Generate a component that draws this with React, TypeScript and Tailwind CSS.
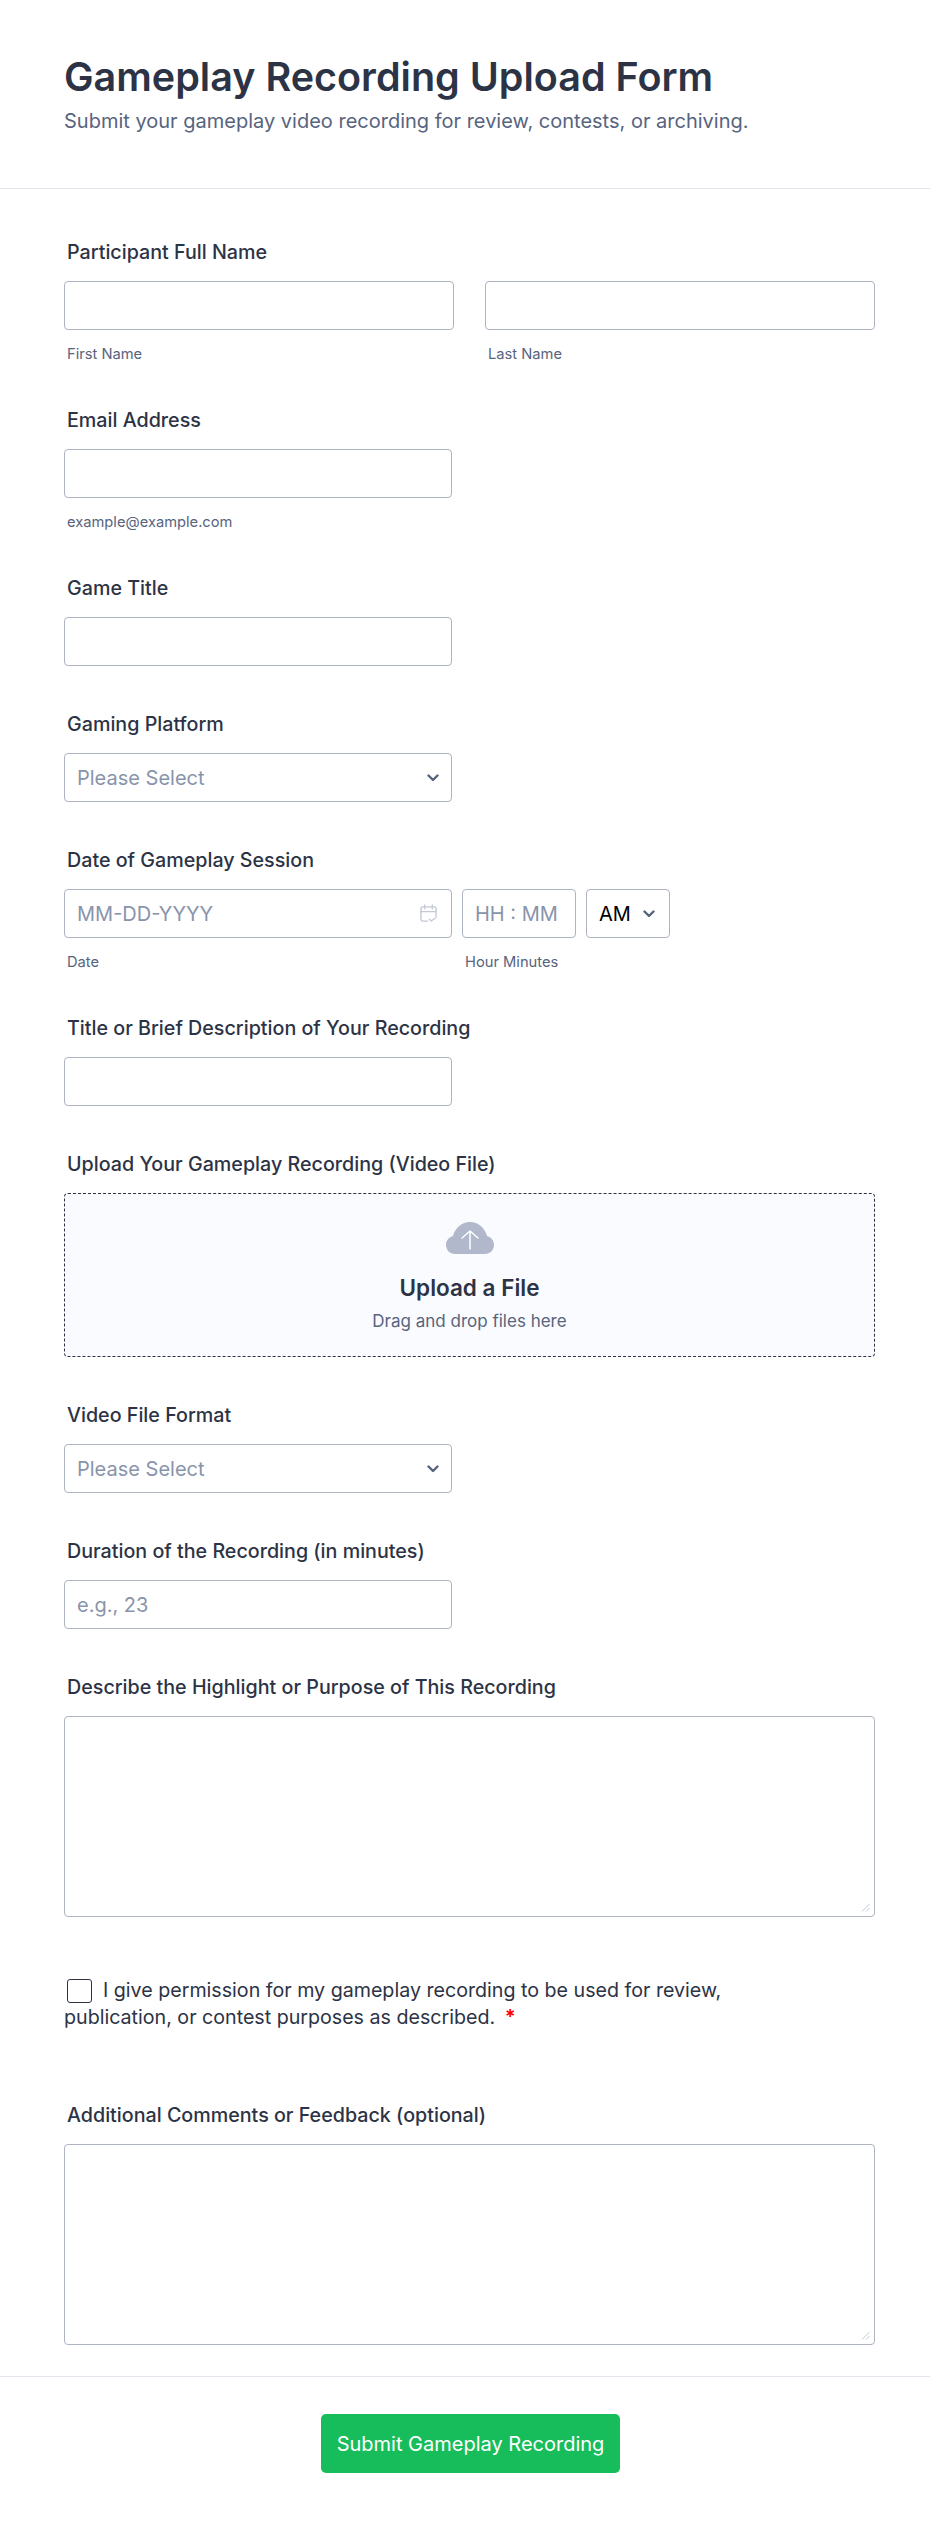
import React from 'react'

const inputClass =
    'block h-[49px] w-full rounded-[4px] border border-[#aeb3c1] bg-white px-[12px] text-[20px] text-[#2c3345] placeholder:text-[#8894ab] outline-none'

function Chevron({ className }: { className: string }) {
    return (
        <svg viewBox="0 0 12 8" fill="none" className={className}>
            <path d="M1.5 1.5 6 6l4.5-4.5" stroke="#57647e" strokeWidth="2.400" strokeLinecap="round" strokeLinejoin="round" />
        </svg>
    )
}

function Label({ children }: { children: React.ReactNode }) {
    return <label className="block pl-[3px] text-[19.700px] leading-[24px] font-[450] text-[#2c3345] mb-[17px] whitespace-nowrap">{children}</label>
}

function Sub({ children }: { children: React.ReactNode }) {
    return <div className="mt-[15px] mb-[-1px] pl-[3px] text-[14.700px] leading-[18px] text-[#57647e]">{children}</div>
}

function SelectBox() {
    return (
        <div className="relative w-[388px]">
            <select defaultValue="" className={`${inputClass} appearance-none !text-[#8894ab]`}>
                <option value="">Please Select</option>
            </select>
            <Chevron className="absolute right-[13px] top-[21px] w-[12px] h-[8px]" />
        </div>
    )
}

function Area() {
    return (
        <div className="relative">
            <textarea className="block h-[201px] w-full resize-none rounded-[4px] border border-[#aeb3c1] bg-white outline-none" />
            <svg viewBox="0 0 9 9" fill="none" stroke="#c3c8d4" strokeWidth="1" className="absolute right-[5px] bottom-[5px] w-[9px] h-[9px]">
                <path d="M1 8.500 8.500 1M5 8.500 8.500 5" />
            </svg>
        </div>
    )
}

export default function App() {
    return (
        <main className="min-h-[2523px] bg-white font-['Inter',sans-serif] text-[#2c3345]">
            {/* Header */}
            <header className="h-[189px] border-b border-[#e3e5ec] px-[64px] pt-[51px]">
                <h1 className="text-[39.500px] leading-[52px] font-semibold text-[#2c3345]">Gameplay Recording Upload Form</h1>
                <p className="mt-[4px] text-[20px] leading-[28px] text-[#57647e]">Submit your gameplay video recording for review, contests, or archiving.</p>
            </header>

            <form className="pl-[64px] pr-[55px] pt-[51px]">
                {/* Name */}
                <div className="mb-[46px]">
                    <Label>Participant Full Name</Label>
                    <div className="flex gap-[31px]">
                        <div className="w-[390px]">
                            <input className={inputClass} />
                            <Sub>First Name</Sub>
                        </div>
                        <div className="w-[390px]">
                            <input className={inputClass} />
                            <Sub>Last Name</Sub>
                        </div>
                    </div>
                </div>

                <div className="mb-[46px] w-[388px]">
                    <Label>Email Address</Label>
                    <input className={inputClass} />
                    <Sub>example@example.com</Sub>
                </div>

                <div className="mb-[46px] w-[388px]">
                    <Label>Game Title</Label>
                    <input className={inputClass} />
                </div>

                <div className="mb-[46px]">
                    <Label>Gaming Platform</Label>
                    <SelectBox />
                </div>

                {/* Date and time */}
                <div className="mb-[46px]">
                    <Label>Date of Gameplay Session</Label>
                    <div className="flex gap-[10px]">
                        <div className="w-[388px]">
                            <div className="relative">
                                <input className={inputClass} placeholder="MM-DD-YYYY" />
                                <svg viewBox="0 0 18 20" fill="none" stroke="#c3c8d4" strokeWidth="1.400" strokeLinecap="round" strokeLinejoin="round" className="absolute right-[15px] top-[15px] w-[17px] h-[19px]">
                                    <path d="M8 18H3a2 2 0 0 1-2-2V5a2 2 0 0 1 2-2h12a2 2 0 0 1 2 2v9" />
                                    <path d="M1 8h16M5 1v4M13 1v4" />
                                    <path d="m10 16 2 2 4-3" />
                                </svg>
                            </div>
                            <Sub>Date</Sub>
                        </div>
                        <div className="w-[114px]">
                            <input className={inputClass} placeholder="HH : MM" />
                            <Sub>Hour Minutes</Sub>
                        </div>
                        <div className="relative w-[84px]">
                            <select defaultValue="AM" className={`${inputClass} appearance-none !text-black`}>
                                <option>AM</option>
                                <option>PM</option>
                            </select>
                            <Chevron className="absolute right-[15px] top-[21px] w-[12px] h-[8px]" />
                        </div>
                    </div>
                </div>

                <div className="mb-[46px] w-[388px]">
                    <Label>Title or Brief Description of Your Recording</Label>
                    <input className={inputClass} />
                </div>

                {/* Upload */}
                <div className="mb-[46px]">
                    <Label>Upload Your Gameplay Recording (Video File)</Label>
                    <div className="flex h-[164px] flex-col items-center rounded-[4px] border border-dashed border-[#2c3345] bg-[#f9fbff] pt-[28px]">
                        <svg viewBox="0 0 48 32" className="w-[48px] h-[32px]">
                            <path d="M9 32C4 32 0 28 0 23c0-4.500 3-8 7-9 2-8 9-14 17-14s15 6 17 14c4 1 7 4.500 7 9 0 5-4 9-9 9H9Z" fill="#b1b8cb" />
                            <path d="M24 27V9M16 16l8-7 8 7" fill="none" stroke="#fff" strokeWidth="1.500" strokeLinecap="round" strokeLinejoin="round" />
                        </svg>
                        <div className="mt-[19px] text-[22.500px] leading-[30px] font-semibold text-[#2c3345]">Upload a File</div>
                        <div className="mt-[6px] text-[17px] leading-[24px] text-[#57647e]">Drag and drop files here</div>
                    </div>
                </div>

                <div className="mb-[46px]">
                    <Label>Video File Format</Label>
                    <SelectBox />
                </div>

                <div className="mb-[46px] w-[388px]">
                    <Label>Duration of the Recording (in minutes)</Label>
                    <input className={inputClass} placeholder="e.g., 23" />
                </div>

                <div className="mb-[60px]">
                    <Label>Describe the Highlight or Purpose of This Recording</Label>
                    <Area />
                </div>

                {/* Consent */}
                <div className="mb-[72px] text-[19.650px] leading-[27px] text-[#2c3345]">
                    <span className="mr-[11px] ml-[3px] inline-block h-[24px] w-[25px] rounded-[3px] border-[1.500px] border-[#2c3345] align-[-6px]" />
                    I give permission for my gameplay recording to be used for review,
                    <br />
                    publication, or contest purposes as described. <span className="ml-[4px] font-bold text-[#ff0000]">*</span>
                </div>

                <div>
                    <Label>Additional Comments or Feedback (optional)</Label>
                    <Area />
                </div>
            </form>

            {/* Footer */}
            <footer className="mt-[31px] flex justify-center border-t border-[#e3e5ec] pl-[11px] pt-[37px]">
                <button type="button" className="h-[59px] w-[299px] rounded-[5px] bg-[#18bd5b] text-[20px] font-normal text-white">
                    Submit Gameplay Recording
                </button>
            </footer>
        </main>
    )
}
